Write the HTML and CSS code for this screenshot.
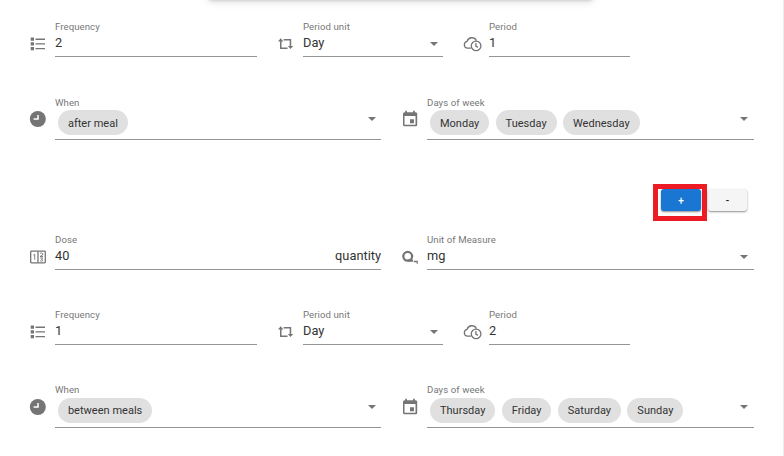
FILE: index.html
```
<!DOCTYPE html>
<html lang="en">
<head>
<meta charset="utf-8">
<title>Dosage</title>
<link rel="stylesheet" href="styles.css">
</head>
<body>
<svg class="defs" aria-hidden="true">
  <symbol id="list" viewBox="0 0 18 18"><path d="M1.700 2.500h3.300v3.300H1.700zM1.700 7.200h3.300v3.300H1.700zM1.700 11.900h3.300v3.300H1.700zM6.500 3.500h9.500v1.400h-9.500zM6.500 8.200h9.500v1.400h-9.500zM6.500 12.900h9.500v1.400h-9.500z"/></symbol>
  <symbol id="repeat" viewBox="0 0 18 18"><path d="M3.700 3.300 6.400 6.400H4.500v6.100h6V14H3V6.400H1zM6.600 4h7.600v6.900h2l-2.700 3-2.700-3h1.900V5.400H6.600z"/></symbol>
  <symbol id="cloud" viewBox="0 0 20 18"><g class="stroke"><path d="M8 13.200H4.500a3.500 3.500 0 0 1-.4-6.900A5 5 0 0 1 13.400 5.600"/><circle cx="13.100" cy="10.900" r="4.800"/><path d="M12.900 8v3.100l2 1.300"/></g></symbol>
  <symbol id="clock" viewBox="0 0 18 18"><circle cx="8.800" cy="9" r="8"/><path class="cut" d="M8.300 5h1.500v4.800H4.600V8.300h3.700z"/></symbol>
  <symbol id="calendar" viewBox="0 0 18 18"><path fill-rule="evenodd" d="M4.200 .7h1.700v1.500h6.200V.7h1.700v1.500h.9q1.500 0 1.500 1.500v11q0 1.500-1.500 1.500H3.500Q2 16.200 2 14.700V3.700q0-1.500 1.500-1.500h.7zM3.500 6v8.700h11V6zM9 9.200h4v4H9z"/></symbol>
  <symbol id="counter" viewBox="0 0 18 18"><g class="stroke"><rect x="1.700" y="3.200" width="14.600" height="11.600" rx=".8"/><path d="M9 3.500v11"/></g><g class="thin"><path d="M4.300 7.200 5.700 6.300v5.400M11 5.500q1.500-1.500 2.700 0T11 8.500h3M11.200 10h2.500l-1.300 1.200q1.800.2 1.200 1.500-1.100 1.100-2.500 0"/></g></symbol>
  <symbol id="tape" viewBox="0 0 18 18"><circle class="ring" cx="6.700" cy="8.300" r="4.400"/><path d="M6.700 11.600h5.300v2.200H6.700zM12.800 12.700h4v3h-1.200v-1.500h-2.800z"/></symbol>
</svg>
<main class="panel">
  <div class="overlay-edge"></div>

  <section class="row three first">
    <svg class="icon"><use href="#list"/></svg>
    <div class="field"><label>Frequency</label><div class="value">2</div></div>
    <svg class="icon"><use href="#repeat"/></svg>
    <div class="field"><label>Period unit</label><div class="value">Day<i class="arrow"></i></div></div>
    <svg class="icon wide"><use href="#cloud"/></svg>
    <div class="field"><label>Period</label><div class="value">1</div></div>
  </section>

  <section class="row two chips-row">
    <svg class="icon"><use href="#clock"/></svg>
    <div class="field"><label>When</label><div class="value"><span class="chip">after meal</span><i class="arrow"></i></div></div>
    <svg class="icon"><use href="#calendar"/></svg>
    <div class="field"><label>Days of week</label><div class="value"><span class="chip">Monday</span><span class="chip">Tuesday</span><span class="chip">Wednesday</span><i class="arrow"></i></div></div>
  </section>

  <div class="actions">
    <div class="highlight"><button class="btn primary">+</button></div>
    <button class="btn">-</button>
  </div>

  <section class="row two dose">
    <svg class="icon"><use href="#counter"/></svg>
    <div class="field"><label>Dose</label><div class="value">40<span class="suffix">quantity</span></div></div>
    <svg class="icon"><use href="#tape"/></svg>
    <div class="field"><label>Unit of Measure</label><div class="value">mg<i class="arrow"></i></div></div>
  </section>

  <section class="row three second">
    <svg class="icon"><use href="#list"/></svg>
    <div class="field"><label>Frequency</label><div class="value">1</div></div>
    <svg class="icon"><use href="#repeat"/></svg>
    <div class="field"><label>Period unit</label><div class="value">Day<i class="arrow"></i></div></div>
    <svg class="icon wide"><use href="#cloud"/></svg>
    <div class="field"><label>Period</label><div class="value">2</div></div>
  </section>

  <section class="row two chips-row last">
    <svg class="icon"><use href="#clock"/></svg>
    <div class="field"><label>When</label><div class="value"><span class="chip">between meals</span><i class="arrow"></i></div></div>
    <svg class="icon"><use href="#calendar"/></svg>
    <div class="field"><label>Days of week</label><div class="value"><span class="chip">Thursday</span><span class="chip">Friday</span><span class="chip">Saturday</span><span class="chip">Sunday</span><i class="arrow"></i></div></div>
  </section>
</main>
</body>
</html>
```
FILE: styles.css
```
* { box-sizing: border-box; }
body { margin: 0; background: #fff; font-family: Roboto, sans-serif; color: #333; }
.defs { position: absolute; width: 0; height: 0; }
.panel { position: relative; width: 784px; height: 456px; padding: 21px 30px 0 29px; border-right: 1px solid #ececec; overflow: hidden; }
.overlay-edge { position: absolute; top: -20px; left: 208px; width: 385px; height: 20px; border-radius: 4px; box-shadow: 0 1px 3px rgba(0,0,0,.12), 0 2px 8px rgba(0,0,0,.12); }

.row { display: grid; height: 36px; }
.three { grid-template-columns: 26px 202px 20px 26px 140px 20px 26px 141px; }
.three > :nth-child(3) { grid-column: 4; }
.three > :nth-child(5) { grid-column: 7; }
.two { grid-template-columns: 26px 326px 20px 26px 327px; }
.two > :nth-child(3) { grid-column: 4; }
.chips-row { height: 43px; margin-top: 40px; }
.dose { margin-top: 13px; }
.second { margin-top: 39px; }
.last { height: 44px; margin-top: 39px; }

.icon { width: 18px; height: 18px; margin-top: 14px; fill: #757575; }
.icon.wide { width: 20px; }
.stroke { fill: none; stroke: #757575; stroke-width: 1.3; }
.thin { fill: none; stroke: #757575; stroke-width: .9; }
.ring { fill: none; stroke: #757575; stroke-width: 2.3; }
.cut { fill: #fff; }

.field { display: flex; flex-direction: column; border-bottom: 1px solid #949494; }
label { height: 12px; font-size: 9.6px; line-height: 12px; color: #777; letter-spacing: .08px; }
.value { display: flex; align-items: center; height: 20px; font-size: 12.8px; line-height: 20px; }
.arrow { width: 0; height: 0; margin: 2px 5px 0 auto; border: 4px solid transparent; border-top-color: #757575; border-bottom: 0; }
.two > :last-child .arrow { margin-right: 6px; }
.suffix { margin-left: auto; }

.chips-row .icon { margin-top: 13px; }
.chips-row .value { height: 25px; margin-top: 1px; padding-left: 3px; gap: 6.500px; }
.chips-row .arrow { margin-top: -7px; }
.last .icon { margin-top: 14px; }
.last .value { margin-top: 2px; }
.chip { height: 25px; padding: 0 9.900px; border-radius: 13px; background: #e0e0e0; font-size: 11px; line-height: 27px; letter-spacing: .02px; white-space: nowrap; }
.last .chip { line-height: 26px; }

.actions { display: flex; justify-content: flex-end; height: 37px; margin: 44px 6px 0 0; gap: 1px; }
.highlight { width: 54px; height: 37px; border: 5px solid #ed1c24; padding: 0 3px; }
.btn { width: 39px; height: 22px; margin: 5px 0 0; padding: 0; border: 0; border-radius: 3px; background: #f5f5f5; color: #212121; font: 500 10px/23px Roboto, sans-serif; box-shadow: 0 1px 2px rgba(0,0,0,.45); }
.btn.primary { display: block; width: 40px; margin: 0; background: #1976d2; color: #fff; }
```
